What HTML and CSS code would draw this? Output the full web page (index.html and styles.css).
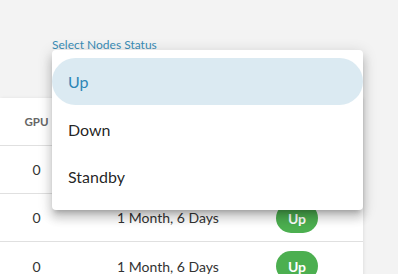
FILE: index.html
```html
<html lang="en"><head>
    <meta charset="UTF-8">
    <meta name="viewport" content="width=device-width, initial-scale=1.0">
    <title>Nodes</title>
    <link rel="stylesheet" href="styles.css">
  </head>
  <body>
    <!-- Filter bar -->
    <div class="filter-bar">
      <div class="select-field">
        <label class="select-label">Select Nodes Status</label>
        <!-- Open menu -->
        <ul class="select-menu">
          <li class="menu-item selected">Up</li>
          <li class="menu-item">Down</li>
          <li class="menu-item">Standby</li>
        </ul>
      </div>
    </div>

    <!-- Nodes table -->
    <div class="table-card">
      <div class="table-row table-head">
        <div class="cell">GPU</div>
        <div class="cell">Uptime</div>
        <div class="cell">Status</div>
      </div>
      <div class="table-row">
        <div class="cell">0</div>
        <div class="cell">1 Month, 6 Days</div>
        <div class="cell"><span class="badge">Up</span></div>
      </div>
      <div class="table-row">
        <div class="cell">0</div>
        <div class="cell">1 Month, 6 Days</div>
        <div class="cell"><span class="badge">Up</span></div>
      </div>
      <div class="table-row">
        <div class="cell">0</div>
        <div class="cell">1 Month, 6 Days</div>
        <div class="cell"><span class="badge">Up</span></div>
      </div>
    </div>
  </body></html>
```

FILE: styles.css
```css
/* General Styling */
body {
  font-family: Lato, "Open Sans", sans-serif;
  margin: 0;
  padding: 0;
  background-color: #f3f3f3;
  overflow: hidden;
}

/* Filter Bar */
.filter-bar {
  height: 98px;
  padding-left: 52px;
  box-sizing: border-box;
}

.select-field {
  position: relative;
  padding-top: 37px;
}

.select-label {
  display: block;
  font-size: 12px;
  line-height: 15px;
  color: #3a8db6;
}

/* Dropdown Menu */
.select-menu {
  position: absolute;
  z-index: 10;
  left: 0;
  top: 50px;
  width: 311px;
  margin: 0;
  padding: 8px 0 10px;
  list-style: none;
  background: #ffffff;
  border-radius: 4px;
  box-shadow: 0 5px 5px -3px rgba(0, 0, 0, 0.2),
    0 8px 10px 1px rgba(0, 0, 0, 0.14),
    0 3px 14px 2px rgba(0, 0, 0, 0.12);
}

.menu-item {
  height: 47px;
  display: flex;
  align-items: center;
  padding-left: 16px;
  font-size: 16px;
  color: rgba(0, 0, 0, 0.87);
}

.menu-item.selected {
  height: 47px;
  margin-bottom: 1px;
  background-color: #dbeaf2;
  border-radius: 24px;
  color: #2d86b6;
}

/* Table */
.table-card {
  width: 363px;
  background: #ffffff;
  box-shadow: 1px 0 3px rgba(0, 0, 0, 0.08);
}

.table-row {
  display: grid;
  grid-template-columns: 73px 190px 68px 32px;
  height: 48px;
  border-bottom: 1px solid #e0e0e0;
  box-sizing: border-box;
}

.table-row:last-child {
  border-bottom: none;
}

.cell {
  display: flex;
  align-items: center;
  justify-content: center;
  font-size: 14px;
  color: #333;
}

.table-head .cell {
  font-size: 11.5px;
  font-weight: bold;
  color: #666;
}

.badge {
  display: inline-block;
  width: 42px;
  height: 30px;
  line-height: 31px;
  text-align: center;
  border-radius: 15px;
  background-color: #4caf50;
  color: #ffffff;
  font-size: 14px;
  font-weight: bold;
}
```
